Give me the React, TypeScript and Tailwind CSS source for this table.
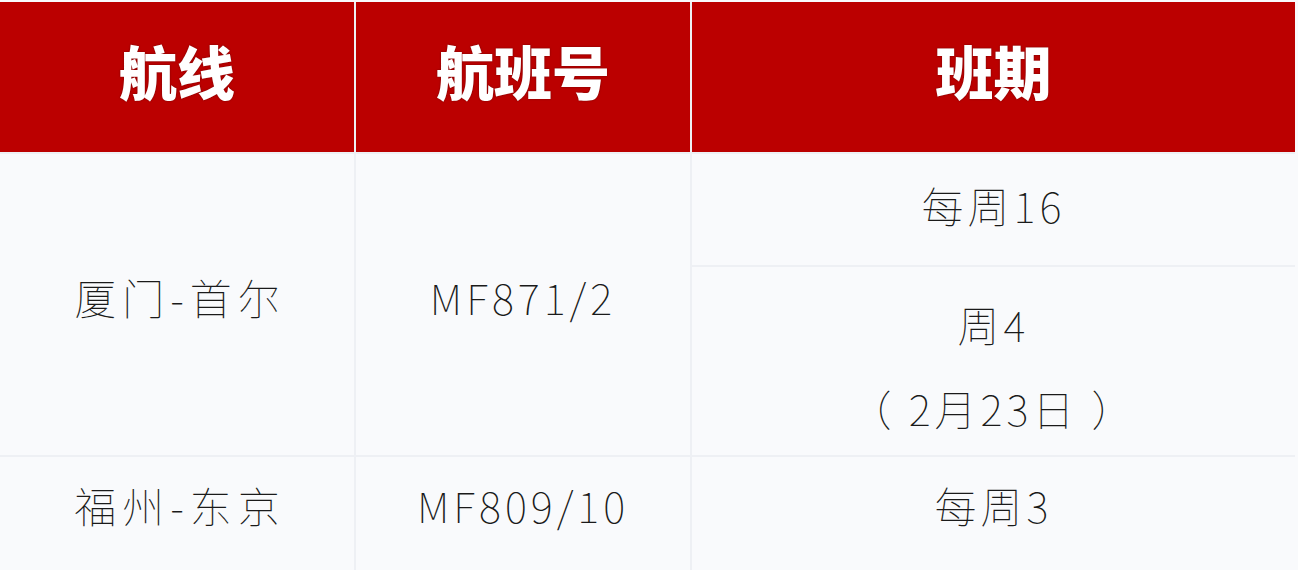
import React from 'react';

const head = 'flex items-center justify-center pb-[14px] bg-[#bb0000] text-white text-[58px] font-black [text-shadow:0_0_2px_rgba(60,0,0,0.6)]';
const cell = 'flex flex-col items-center justify-center bg-[#f9fafc] text-[#1a1a1a] text-[42px] font-thin tracking-[4px]';

const App: React.FC = () => {
  return (
    <div className="w-[1298px] h-[570px] bg-[#f9fafc] pt-[2px] pr-[3px] font-['Noto_Sans_CJK_SC','Noto_Sans',sans-serif] overflow-hidden">
      <div className="grid grid-cols-[354px_334px_1fr] grid-rows-[150px_111px_188px_113px] gap-[2px] bg-[#eef0f4]">
        <div className={head}>航线</div>
        <div className={head}>航班号</div>
        <div className={head}>班期</div>

        <div className={`${cell} row-span-2 pb-[16px] pl-[6px] tracking-[6px]`}>厦门-首尔</div>
        <div className={`${cell} row-span-2 pb-[16px]`}>MF871/2</div>
        <div className={`${cell} pb-[10px]`}>每周16</div>
        <div className={`${cell} gap-[21px] pt-[9px]`}>
          <span>周4</span>
          <span>（ 2月23日 ）</span>
        </div>

        <div className={`${cell} pb-[18px] pl-[6px] tracking-[6px]`}>福州-东京</div>
        <div className={`${cell} pb-[18px]`}>MF809/10</div>
        <div className={`${cell} pb-[18px]`}>每周3</div>
      </div>
    </div>
  );
};

export default App;
